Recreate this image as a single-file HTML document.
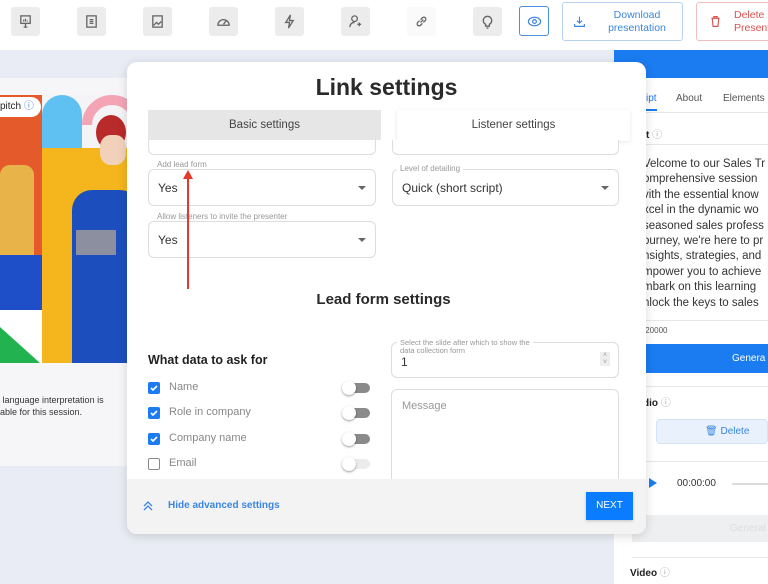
<!DOCTYPE html>
<html><head><meta charset="utf-8"><style>
*{box-sizing:border-box;margin:0;padding:0}
body{width:768px;height:584px;overflow:hidden;background:#e9ecf4;font-family:"Liberation Sans",sans-serif;position:relative;color:#222}
.abs{position:absolute}
.tb{left:0;top:0;width:768px;height:50px;background:#fff}
.ic{top:7px;width:29px;height:29px;background:#ececec;border-radius:3px;display:flex;align-items:center;justify-content:center}
.ic svg{width:15px;height:15px;fill:none;stroke:#666;stroke-width:1.4}
.field{border:1px solid #ddd;border-radius:6px;background:#fff}
.lbl{font-size:8px;color:#999;background:#fff;padding:0 3px}
.val{font-size:12px;color:#333}
.caret{width:0;height:0;border-left:4px solid transparent;border-right:4px solid transparent;border-top:4px solid #666}
.cb{width:12px;height:12px;border-radius:2px;background:#1a7cf0;display:flex;align-items:center;justify-content:center}
.cb svg{width:10px;height:10px}
.tg{width:26px;height:10px;border-radius:5px;background:#8a8a8a}
.tg:after{content:"";position:absolute;left:-2px;top:-2px;width:14px;height:14px;border-radius:50%;background:#fff;box-shadow:0 1px 2px rgba(0,0,0,.4)}
.rt{font-size:11.5px;color:#333;line-height:15.4px;white-space:nowrap}
</style></head><body>
<div class="abs tb"></div>
<div class="abs ic" style="left:11px"><svg viewBox="0 0 16 16"><rect x="3" y="2" width="10" height="8"/><path d="M8 10v4M6 14h4M6 8V6M8 8V5M10 8V7"/></svg></div>
<div class="abs ic" style="left:77px"><svg viewBox="0 0 16 16"><rect x="3" y="2" width="10" height="12"/><path d="M6 6h4M6 8h4M6 10h4"/></svg></div>
<div class="abs ic" style="left:143px"><svg viewBox="0 0 16 16"><rect x="3" y="2" width="10" height="12"/><path d="M4 12l3-3 2 2 3-3"/></svg></div>
<div class="abs ic" style="left:209px"><svg viewBox="0 0 16 16"><path d="M2 12a6 6 0 0 1 12 0zM8 11l3-4"/></svg></div>
<div class="abs ic" style="left:275px"><svg viewBox="0 0 16 16"><path d="M9 1L4 9h4l-1 6 5-8H8z"/></svg></div>
<div class="abs ic" style="left:341px"><svg viewBox="0 0 16 16"><circle cx="7" cy="5" r="3"/><path d="M2 14c0-3 2-5 5-5M12 9v4M10 11h4"/></svg></div>
<div class="abs ic" style="left:407px;background:#fafafa"><svg viewBox="0 0 16 16"><path d="M7 9l3-3M6 7L4 9a2 2 0 0 0 3 3l2-2M10 9l2-2a2 2 0 0 0-3-3L7 6"/></svg></div>
<div class="abs ic" style="left:473px"><svg viewBox="0 0 16 16"><path d="M6 11a4.5 4.5 0 1 1 4 0v2H6zM7 15h2"/></svg></div>
<div class="abs" style="left:519px;top:6px;width:30px;height:30px;border:1px solid #4a8fe0;border-radius:3px;display:flex;align-items:center;justify-content:center"><svg width="15" height="15" viewBox="0 0 16 16" fill="none" stroke="#3b86e0" stroke-width="1.3"><ellipse cx="8" cy="8" rx="6.5" ry="4.5"/><circle cx="8" cy="8" r="2"/></svg></div>
<div class="abs" style="left:562px;top:2px;width:121px;height:39px;border:1px solid #b8d2f2;border-radius:3px;background:#fff"><svg class="abs" style="left:10px;top:12px" width="13" height="13" viewBox="0 0 16 16" fill="none" stroke="#3b86e0" stroke-width="1.4"><path d="M8 2v8M5 7l3 3 3-3M2 11v3h12v-3"/></svg><div class="abs" style="left:34px;top:6px;width:80px;text-align:center;font-size:10.5px;color:#3b86e0;line-height:13px">Download presentation</div></div>
<div class="abs" style="left:696px;top:2px;width:90px;height:39px;border:1px solid #f0c0c0;border-radius:3px;background:#fff"><svg class="abs" style="left:12px;top:12px" width="13" height="13" viewBox="0 0 16 16" fill="none" stroke="#d9534f" stroke-width="1.4"><path d="M3 4h10M6 4V2h4v2M4 4l1 10h6l1-10"/></svg><div class="abs" style="left:37px;top:6px;font-size:10.5px;color:#d9534f;line-height:13px;white-space:nowrap">Delete<br>Presentation</div></div>

<!-- left slide card -->
<div class="abs" style="left:0;top:78px;width:140px;height:388px;background:#f6f6f8"></div>
<div class="abs" style="left:0;top:95px;width:140px;height:268px;overflow:hidden;background:#f4f4f6">
 <div class="abs" style="left:0;top:0;width:42px;height:160px;background:#e55a2a"></div>
 <div class="abs" style="left:42px;top:0;width:40px;height:53px;background:#5ec1f2;border-radius:20px 20px 0 0"></div>
 <div class="abs" style="left:82px;top:0;width:60px;height:60px;border:10px solid #f3a5b5;border-radius:50%;clip-path:inset(0 0 50% 0)"></div>
 <div class="abs" style="left:42px;top:53px;width:100px;height:215px;background:#f5b51d"></div>
 <div class="abs" style="left:0;top:160px;width:42px;height:55px;background:#1f4fc8"></div>
 <div class="abs" style="left:0;top:215px;width:42px;height:53px;background:#fff"></div>
 <div class="abs" style="left:0;top:232px;width:0;height:0;border-right:40px solid transparent;border-bottom:36px solid #22b350"></div>
 <div class="abs" style="left:0;top:70px;width:34px;height:90px;background:#e8b44a;border-radius:10px 10px 0 0"></div>
 <div class="abs" style="left:96px;top:20px;width:30px;height:35px;background:#b92a2a;border-radius:50%"></div>
 <div class="abs" style="left:100px;top:40px;width:26px;height:30px;background:#f2d1bb;border-radius:40%"></div>
 <div class="abs" style="left:72px;top:95px;width:68px;height:173px;background:#1d4ebd;border-radius:20px 20px 0 0"></div>
 <div class="abs" style="left:76px;top:135px;width:40px;height:25px;background:#8b8fa0"></div>
 <div class="abs" style="left:0;top:2px;width:41px;height:20px;background:#fff;border-radius:0 10px 10px 0;font-size:10px;line-height:20px">pitch <span style="color:#3b86e0">ⓘ</span></div>
</div>
<div class="abs" style="left:0;top:394px;font-size:9px;line-height:12px;color:#333">&nbsp;language interpretation is<br>able for this session.</div>

<!-- right panel -->
<div class="abs" style="left:614px;top:50px;width:154px;height:534px;background:#fff"></div>
<div class="abs" style="left:614px;top:50px;width:154px;height:28px;background:#1a7cf0"></div>
<div class="abs" style="left:646px;top:93px;font-size:10px;color:#1a7cf0;border-bottom:2px solid #1a7cf0;padding-bottom:5px">ipt</div>
<div class="abs" style="left:676px;top:93px;font-size:10px;color:#555">About</div>
<div class="abs" style="left:723px;top:93px;font-size:10px;color:#555">Elements</div>
<div class="abs" style="left:614px;top:112px;width:154px;height:1px;background:#e6e6e6"></div>
<div class="abs" style="left:646px;top:126px;font-size:10px;font-weight:bold">t <span style="color:#aaa;font-weight:normal">ⓘ</span></div>
<div class="abs" style="left:614px;top:144px;width:154px;height:1px;background:#e6e6e6"></div>
<div class="abs rt" style="left:643px;top:157px">Velcome to our Sales Tr<br>omprehensive session<br>vith the essential know<br>xcel in the dynamic wo<br>seasoned sales profess<br>ourney, we're here to pr<br>nsights, strategies, and<br>mpower you to achieve<br>mbark on this learning<br>nlock the keys to sales</div>
<div class="abs" style="left:614px;top:320px;width:154px;height:1px;background:#e6e6e6"></div>
<div class="abs" style="left:643px;top:326px;font-size:8px;color:#555">/20000</div>
<div class="abs" style="left:632px;top:344px;width:136px;height:29px;background:#1a7cf0;color:#fff;font-size:10px;line-height:29px;padding-left:100px">Genera</div>
<div class="abs" style="left:632px;top:386px;width:136px;height:1px;background:#e6e6e6"></div>
<div class="abs" style="left:643px;top:394px;font-size:10px;font-weight:bold">dio <span style="color:#aaa;font-weight:normal">ⓘ</span></div>
<div class="abs" style="left:656px;top:419px;width:112px;height:25px;background:#e8f1fc;border:1px solid #d4e4f7;border-radius:4px;color:#3b86e0;font-size:10px;line-height:23px;padding-left:48px">🗑︎ Delete</div>
<div class="abs" style="left:632px;top:461px;width:136px;height:1px;background:#e6e6e6"></div>
<div class="abs" style="left:649px;top:478px;width:0;height:0;border-top:5px solid transparent;border-bottom:5px solid transparent;border-left:8px solid #1a7cf0"></div>
<div class="abs" style="left:677px;top:478px;font-size:10px;color:#333">00:00:00</div>
<div class="abs" style="left:732px;top:483px;width:36px;height:2px;background:#ddd"></div>
<div class="abs" style="left:632px;top:515px;width:136px;height:27px;background:#eeeff1;font-size:10px;color:#ddd;line-height:27px;padding-left:98px">Generat</div>
<div class="abs" style="left:632px;top:557px;width:136px;height:1px;background:#e6e6e6"></div>
<div class="abs" style="left:630px;top:564px;font-size:10px;font-weight:bold">Video <span style="color:#aaa;font-weight:normal">ⓘ</span></div>

<!-- modal -->
<div class="abs" style="left:127px;top:62px;width:519px;height:472px;background:#fff;border-radius:10px;box-shadow:0 2px 10px rgba(0,0,0,.15);overflow:hidden">
 <div class="abs" style="left:0;top:12px;width:519px;text-align:center;font-size:23px;font-weight:bold;color:#2a2a2a">Link settings</div>
 <div class="abs" style="left:21px;top:48px;width:233px;height:30px;background:#e6e6e6;text-align:center;line-height:30px;font-size:11.5px;color:#444">Basic settings</div>
 <div class="abs" style="left:270px;top:48px;width:233px;height:31px;background:#fff;box-shadow:0 1px 4px rgba(0,0,0,.1);text-align:center;line-height:30px;font-size:11.5px;color:#444">Listener settings</div>
 <div class="abs field" style="left:21px;top:78px;width:228px;height:15px;border-top:none;border-radius:0 0 6px 6px"></div>
 <div class="abs field" style="left:265px;top:78px;width:227px;height:15px;border-top:none;border-radius:0 0 6px 6px"></div>

 <div class="abs field" style="left:21px;top:107px;width:228px;height:37px"><span class="abs val" style="left:9px;top:11px">Yes</span><div class="abs caret" style="right:9px;top:16px"></div></div>
 <div class="abs lbl" style="left:27px;top:98px">Add lead form</div>
 <div class="abs field" style="left:265px;top:107px;width:227px;height:37px"><span class="abs val" style="left:9px;top:11px">Quick (short script)</span><div class="abs caret" style="right:9px;top:16px"></div></div>
 <div class="abs lbl" style="left:270px;top:102px">Level of detailing</div>
 <div class="abs field" style="left:21px;top:159px;width:228px;height:37px"><span class="abs val" style="left:9px;top:11px">Yes</span><div class="abs caret" style="right:9px;top:16px"></div></div>
 <div class="abs lbl" style="left:27px;top:150px">Allow listeners to invite the presenter</div>
 <div class="abs" style="left:60px;top:112px;width:2px;height:115px;background:#e53a2a"></div>
 <div class="abs" style="left:56px;top:108px;width:0;height:0;border-left:5px solid transparent;border-right:5px solid transparent;border-bottom:9px solid #e53a2a"></div>

 <div class="abs" style="left:0;top:229px;width:513px;text-align:center;font-size:15px;font-weight:bold;color:#2a2a2a">Lead form settings</div>
 <div class="abs" style="left:21px;top:291px;font-size:12.5px;font-weight:bold;color:#222">What data to ask for</div>
 <div class="abs cb" style="left:21px;top:320px"><svg viewBox="0 0 10 10" fill="none" stroke="#fff" stroke-width="1.6"><path d="M2 5l2 2 4-4"/></svg></div>
 <div class="abs" style="left:42px;top:319px;font-size:11px;color:#888">Name</div>
 <div class="abs tg" style="left:217px;top:321px"></div>
 <div class="abs cb" style="left:21px;top:345px"><svg viewBox="0 0 10 10" fill="none" stroke="#fff" stroke-width="1.6"><path d="M2 5l2 2 4-4"/></svg></div>
 <div class="abs" style="left:42px;top:344px;font-size:11px;color:#888">Role in company</div>
 <div class="abs tg" style="left:217px;top:346px"></div>
 <div class="abs cb" style="left:21px;top:371px"><svg viewBox="0 0 10 10" fill="none" stroke="#fff" stroke-width="1.6"><path d="M2 5l2 2 4-4"/></svg></div>
 <div class="abs" style="left:42px;top:370px;font-size:11px;color:#888">Company name</div>
 <div class="abs tg" style="left:217px;top:372px"></div>
 <div class="abs" style="left:21px;top:396px;width:12px;height:12px;border:1.5px solid #888;border-radius:2px"></div>
 <div class="abs" style="left:42px;top:395px;font-size:11px;color:#888">Email</div>
 <div class="abs tg" style="left:217px;top:397px;background:#ececec"></div>

 <div class="abs field" style="left:264px;top:280px;width:228px;height:36px"><span class="abs val" style="left:9px;top:12px">1</span><div class="abs" style="right:8px;top:9px;width:10px;height:14px;background:#eee;font-size:7px;color:#999;text-align:center;line-height:7px">˄<br>˅</div></div>
 <div class="abs" style="left:270px;top:277px;font-size:7.5px;line-height:8px;color:#999;background:#fff;padding:0 3px">Select the slide after which to show the<br>data collection form</div>
 <div class="abs field" style="left:264px;top:327px;width:228px;height:95px"><span class="abs" style="left:10px;top:10px;font-size:11px;color:#999">Message</span></div>

 <div class="abs" style="left:0;top:417px;width:519px;height:55px;background:#f3f3f4"></div>
 <svg class="abs" style="left:15px;top:438px" width="12" height="12" viewBox="0 0 12 12" fill="none" stroke="#3b86e0" stroke-width="1.3"><path d="M2 6l4-4 4 4M2 10l4-4 4 4"/></svg>
 <div class="abs" style="left:41px;top:438px;font-size:10px;font-weight:bold;color:#3b86e0">Hide advanced settings</div>
 <div class="abs" style="left:459px;top:430px;width:47px;height:28px;background:#0a7cff;color:#fff;font-size:10px;line-height:28px;text-align:center;box-shadow:0 1px 3px rgba(0,0,0,.2)">NEXT</div>
</div>
</body></html>
